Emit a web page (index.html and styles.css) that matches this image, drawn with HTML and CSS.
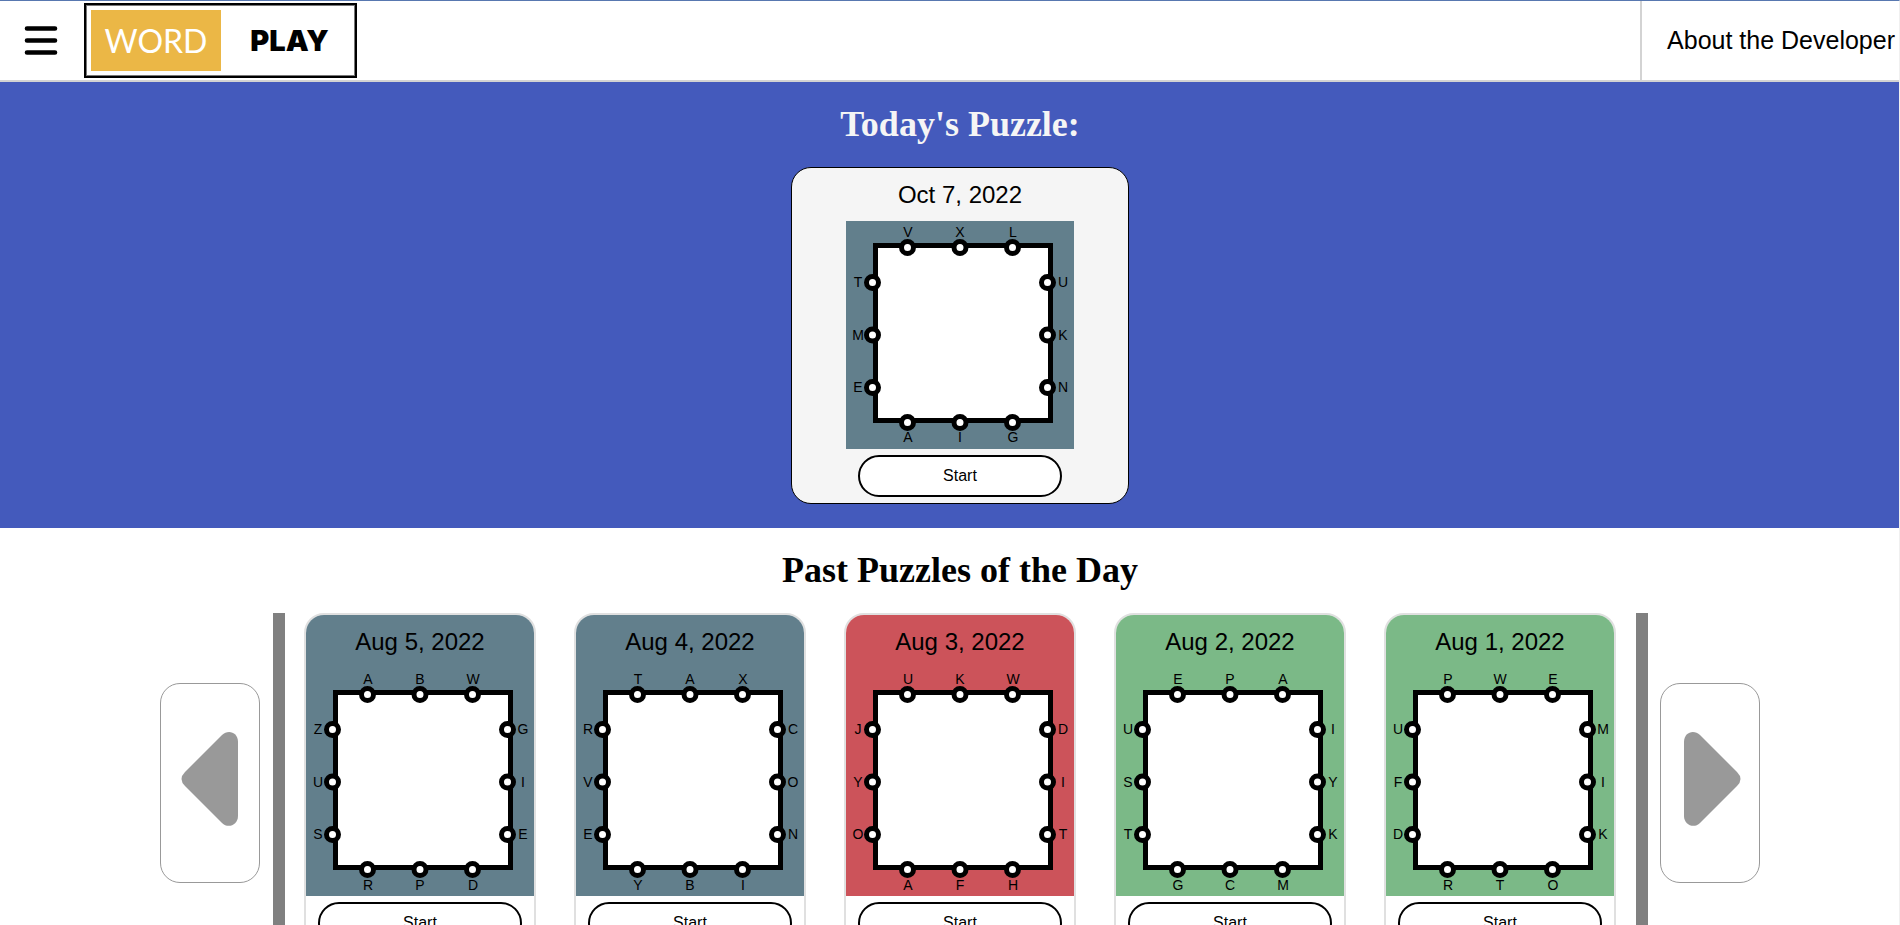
FILE: index.html
```html
<!DOCTYPE html>
<html lang="en">
<head>
<meta charset="utf-8">
<title>Word Play</title>
<link rel="stylesheet" href="styles.css">
</head>
<body>
<svg class="defs" aria-hidden="true">
  <symbol id="board" viewBox="0 0 228 228">
    <rect x="29.5" y="24.5" width="175" height="175" fill="#fff" stroke="#000" stroke-width="5"/>
    <g fill="#fff" stroke="#000" stroke-width="5">
      <circle cx="61.5" cy="26.5" r="6"/><circle cx="114" cy="26.5" r="6"/><circle cx="166.5" cy="26.5" r="6"/>
      <circle cx="26.5" cy="61.5" r="6"/><circle cx="26.5" cy="114" r="6"/><circle cx="26.5" cy="166.5" r="6"/>
      <circle cx="201.5" cy="61.5" r="6"/><circle cx="201.5" cy="114" r="6"/><circle cx="201.5" cy="166.5" r="6"/>
      <circle cx="61.5" cy="201.5" r="6"/><circle cx="114" cy="201.5" r="6"/><circle cx="166.5" cy="201.5" r="6"/>
    </g>
  </symbol>
</svg>

<header class="topbar">
  <button class="menu" aria-label="Menu">
    <svg width="34" height="30" viewBox="0 0 34 30" stroke="#000" stroke-width="4.600" stroke-linecap="round"><path d="M3 2.500H31M3 14.500H31M3 26.500H31"/></svg>
  </button>
  <a class="logo" href="#"><span class="logo-word">WORD</span><span class="logo-play">PLAY</span></a>
  <a class="about" href="#">About the Developer</a>
</header>

<main>
  <section class="today">
    <h2>Today's Puzzle:</h2>
    <article class="today-card">
      <h3>Oct 7, 2022</h3>
      <svg class="puzzle slate" viewBox="0 0 228 228">
        <use href="#board"/>
        <text x="62" y="16">V</text><text x="114" y="16">X</text><text x="167" y="16">L</text>
        <text x="12" y="66">T</text><text x="12" y="119">M</text><text x="12" y="171">E</text>
        <text x="217" y="66">U</text><text x="217" y="119">K</text><text x="217" y="171">N</text>
        <text x="62" y="221">A</text><text x="114" y="221">I</text><text x="167" y="221">G</text>
      </svg>
      <button class="start">Start</button>
    </article>
  </section>

  <section class="past">
    <h2>Past Puzzles of the Day</h2>
    <div class="carousel">
      <button class="arrow" aria-label="Newer puzzles">
        <svg width="58" height="96" viewBox="0 0 58 96"><path fill="#999" d="M4 41L41 4C47-2 57 1 57 11V85C57 94 47 98 41 92L4 55Q-3 48 4 41Z"/></svg>
      </button>
      <div class="track">
        <article class="card">
          <h3 class="slate">Aug 5, 2022</h3>
          <svg class="puzzle slate" viewBox="0 0 228 228">
            <use href="#board"/>
            <text x="62" y="16">A</text><text x="114" y="16">B</text><text x="167" y="16">W</text>
            <text x="12" y="66">Z</text><text x="12" y="119">U</text><text x="12" y="171">S</text>
            <text x="217" y="66">G</text><text x="217" y="119">I</text><text x="217" y="171">E</text>
            <text x="62" y="222">R</text><text x="114" y="222">P</text><text x="167" y="222">D</text>
          </svg>
          <button class="start">Start</button>
        </article>
        <article class="card">
          <h3 class="slate">Aug 4, 2022</h3>
          <svg class="puzzle slate" viewBox="0 0 228 228">
            <use href="#board"/>
            <text x="62" y="16">T</text><text x="114" y="16">A</text><text x="167" y="16">X</text>
            <text x="12" y="66">R</text><text x="12" y="119">V</text><text x="12" y="171">E</text>
            <text x="217" y="66">C</text><text x="217" y="119">O</text><text x="217" y="171">N</text>
            <text x="62" y="222">Y</text><text x="114" y="222">B</text><text x="167" y="222">I</text>
          </svg>
          <button class="start">Start</button>
        </article>
        <article class="card">
          <h3 class="red">Aug 3, 2022</h3>
          <svg class="puzzle red" viewBox="0 0 228 228">
            <use href="#board"/>
            <text x="62" y="16">U</text><text x="114" y="16">K</text><text x="167" y="16">W</text>
            <text x="12" y="66">J</text><text x="12" y="119">Y</text><text x="12" y="171">O</text>
            <text x="217" y="66">D</text><text x="217" y="119">I</text><text x="217" y="171">T</text>
            <text x="62" y="222">A</text><text x="114" y="222">F</text><text x="167" y="222">H</text>
          </svg>
          <button class="start">Start</button>
        </article>
        <article class="card">
          <h3 class="green">Aug 2, 2022</h3>
          <svg class="puzzle green" viewBox="0 0 228 228">
            <use href="#board"/>
            <text x="62" y="16">E</text><text x="114" y="16">P</text><text x="167" y="16">A</text>
            <text x="12" y="66">U</text><text x="12" y="119">S</text><text x="12" y="171">T</text>
            <text x="217" y="66">I</text><text x="217" y="119">Y</text><text x="217" y="171">K</text>
            <text x="62" y="222">G</text><text x="114" y="222">C</text><text x="167" y="222">M</text>
          </svg>
          <button class="start">Start</button>
        </article>
        <article class="card">
          <h3 class="green">Aug 1, 2022</h3>
          <svg class="puzzle green" viewBox="0 0 228 228">
            <use href="#board"/>
            <text x="62" y="16">P</text><text x="114" y="16">W</text><text x="167" y="16">E</text>
            <text x="12" y="66">U</text><text x="12" y="119">F</text><text x="12" y="171">D</text>
            <text x="217" y="66">M</text><text x="217" y="119">I</text><text x="217" y="171">K</text>
            <text x="62" y="222">R</text><text x="114" y="222">T</text><text x="167" y="222">O</text>
          </svg>
          <button class="start">Start</button>
        </article>
      </div>
      <button class="arrow" aria-label="Older puzzles">
        <svg width="58" height="96" viewBox="-2 0 58 96" overflow="visible"><path fill="#999" d="M54 41L17 4C11-2 1 1 1 11V85C1 94 11 98 17 92L54 55Q61 48 54 41Z"/></svg>
      </button>
    </div>
  </section>
</main>
</body>
</html>
```
FILE: styles.css
```css
* {
  box-sizing: border-box;
}

body {
  margin: 0;
  height: 100vh;
  overflow: hidden;
  border-top: 1px solid #5878b0;
  border-right: 1px solid #f0f0f0;
  background: #fff;
  color: #000;
  font-family: Arial, "Liberation Sans", sans-serif;
}

button {
  padding: 0;
  background: #fff;
  color: #000;
  font-family: inherit;
  cursor: pointer;
}

h2,
h3 {
  margin: 0;
}

.defs {
  display: none;
}

.topbar {
  display: flex;
  align-items: center;
  height: 81px;
  border-bottom: 2px solid #d3d3d3;
}

.menu {
  display: flex;
  margin: 0 26px 0 24px;
  border: 0;
}

.logo {
  display: flex;
  width: 273px;
  height: 75px;
  padding: 5px;
  border: 2px solid #000;
  box-shadow: inset 0 0 0 1px #777;
  color: #000;
  font-family: Inter, sans-serif;
  font-size: 29px;
  line-height: 61px;
  text-align: center;
  text-decoration: none;
}

.logo-word {
  width: 130px;
  background: #ebb746;
  color: #fff;
  font-family: Lato, sans-serif;
  font-size: 32px;
}

.logo-play {
  flex: 1;
  padding-left: 8px;
  font-weight: 900;
}

.about {
  display: flex;
  align-items: center;
  align-self: stretch;
  margin-left: auto;
  padding: 0 4px 0 25px;
  border-left: 2px solid #d3d3d3;
  color: #000;
  font-size: 25px;
  text-decoration: none;
}

.today,
.past {
  display: flex;
  flex-direction: column;
  align-items: center;
  padding-left: 21px;
}

.today {
  padding-bottom: 24px;
  background: #445abc;
}

h2 {
  height: 85px;
  font-family: Georgia, "Liberation Serif", serif;
  font-size: 36px;
  line-height: 85px;
}

.today h2 {
  color: #f5f5f5;
}

h3 {
  height: 53px;
  font-size: 24px;
  font-weight: 400;
  line-height: 53px;
  text-align: center;
}

.today-card,
.card {
  display: flex;
  flex-direction: column;
  align-items: center;
  padding-bottom: 6px;
}

.today-card {
  width: 338px;
  border: 1px solid #000;
  border-radius: 20px;
  background: #f5f5f5;
}

.puzzle {
  display: block;
  width: 228px;
  height: 228px;
  font-size: 14px;
  text-anchor: middle;
}

.slate {
  background: #627f8c;
}

.red {
  background: #cc535a;
}

.green {
  background: #7bb987;
}

.start {
  width: 204px;
  height: 42px;
  margin-top: 6px;
  border: 2px solid #000;
  border-radius: 21px;
  font-size: 16px;
}

.carousel {
  display: flex;
  align-items: center;
  width: 100%;
  max-width: 1600px;
}

.arrow {
  display: flex;
  align-items: center;
  justify-content: center;
  flex: none;
  width: 100px;
  height: 200px;
  padding-bottom: 8px;
  border: 1px solid #999;
  border-radius: 20px;
}

.track {
  display: flex;
  flex: 1;
  justify-content: space-between;
  margin: 0 12px 0 13px;
  padding: 0 20px 0 19px;
  border: solid #808080;
  border-width: 0 12px;
}

.card {
  width: 232px;
  overflow: hidden;
  border: 2px solid #e0e0e0;
  border-radius: 20px;
}

.card h3 {
  width: 100%;
}
```
